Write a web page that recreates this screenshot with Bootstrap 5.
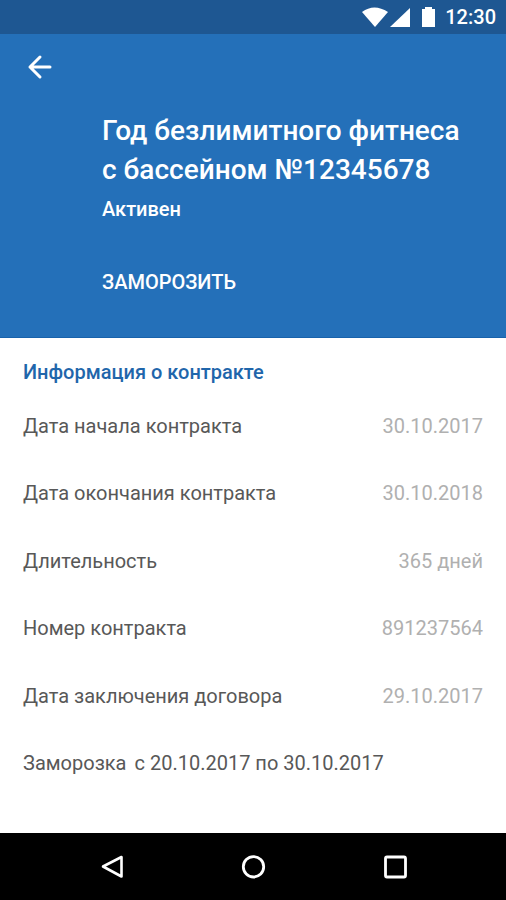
<!DOCTYPE html>
<html lang="ru">
<head>
<meta charset="utf-8">
<meta name="viewport" content="width=device-width, initial-scale=1">
<title>Контракт</title>
<link rel="stylesheet" href="https://cdn.jsdelivr.net/npm/bootstrap@5.3.0/dist/css/bootstrap.min.css">
<style>
body{font-family:Roboto,"Noto Sans",sans-serif;font-size:20px;line-height:28px;color:#585858;background:#fff}
.fw-medium{font-weight:500}
.statusbar{background:#1e5792;height:34px;padding-right:10px;font-size:20px}
.hero{background:#2470b9;border-bottom:1px solid #1862ab;padding:16px 22px 41px}
.back-btn{width:34px;height:34px}
.hero-body{padding-left:80px;padding-top:27px}
.title{font-size:28px;line-height:39px;font-weight:500}
.state{margin-top:6px}
.freeze-btn{font-size:20px;line-height:28px;font-weight:500;margin-top:45px}
.info{padding:20px 23px 56px}
.section-title{font-size:20px;line-height:28px;font-weight:500;color:#1f66ab}
.info-list{margin-top:26px}
.info-value{color:#b0b0b0}
.sysbar{background:#000;height:67px}
.sysbar-btn{width:142px}
</style>
<script src="https://cdn.jsdelivr.net/npm/bootstrap@5.3.0/dist/js/bootstrap.bundle.min.js"></script>
</head>
<body class="d-flex flex-column min-vh-100">
<div class="statusbar d-flex align-items-center justify-content-end text-white fw-medium">
<svg width="84" height="34" viewBox="0 0 84 34" fill="#fff" aria-hidden="true"><path d="M1 12Q13 3 27 12L14 27Z"/><path d="M49 8V27H29Z"/><path d="M61 9h3V7h7v2h3v18H61Z"/></svg>
<span>12:30</span>
</div>
<header class="hero text-white">
<button class="back-btn btn p-0 border-0 text-white d-flex align-items-center justify-content-center" type="button" aria-label="Назад"><svg width="34" height="34" viewBox="0 0 34 34" fill="none" stroke="currentColor" stroke-width="3" stroke-linecap="round" stroke-linejoin="round"><path d="M28 17H8M18 7L8 17L18 27"/></svg></button>
<div class="hero-body">
<h1 class="title m-0">Год безлимитного фитнеса<br>с бассейном №12345678</h1>
<p class="state fw-medium mb-0">Активен</p>
<button type="button" class="freeze-btn btn p-0 border-0 text-white">ЗАМОРОЗИТЬ</button>
</div>
</header>
<main class="info flex-grow-1 d-flex flex-column">
<h2 class="section-title m-0">Информация о контракте</h2>
<dl class="info-list mb-0 flex-grow-1 d-flex flex-column justify-content-between">
<div class="d-flex justify-content-between"><dt class="fw-normal">Дата начала контракта</dt><dd class="info-value m-0">30.10.2017</dd></div>
<div class="d-flex justify-content-between"><dt class="fw-normal">Дата окончания контракта</dt><dd class="info-value m-0">30.10.2018</dd></div>
<div class="d-flex justify-content-between"><dt class="fw-normal">Длительность</dt><dd class="info-value m-0">365 дней</dd></div>
<div class="d-flex justify-content-between"><dt class="fw-normal">Номер контракта</dt><dd class="info-value m-0">891237564</dd></div>
<div class="d-flex justify-content-between"><dt class="fw-normal">Дата заключения договора</dt><dd class="info-value m-0">29.10.2017</dd></div>
<div class="d-flex gap-2"><dt class="fw-normal">Заморозка</dt><dd class="m-0">с 20.10.2017 по 30.10.2017</dd></div>
</dl>
</main>
<nav class="sysbar d-flex justify-content-center" aria-label="Система">
<button type="button" class="sysbar-btn btn p-0 border-0 text-white" aria-label="Назад"><svg width="28" height="28" viewBox="0 0 28 28" fill="none" stroke="currentColor" stroke-width="2.6" stroke-linejoin="round"><path d="M24.5 4V23.5L6 13.5Z"/></svg></button>
<button type="button" class="sysbar-btn btn p-0 border-0 text-white" aria-label="Домой"><svg width="28" height="28" viewBox="0 0 28 28" fill="none" stroke="currentColor" stroke-width="2.8"><circle cx="14.5" cy="13.8" r="10.2"/></svg></button>
<button type="button" class="sysbar-btn btn p-0 border-0 text-white" aria-label="Обзор"><svg width="28" height="28" viewBox="0 0 28 28" fill="none" stroke="currentColor" stroke-width="2.8"><rect x="4.5" y="4" width="20" height="20" rx="1.5"/></svg></button>
</nav>
</body>
</html>
